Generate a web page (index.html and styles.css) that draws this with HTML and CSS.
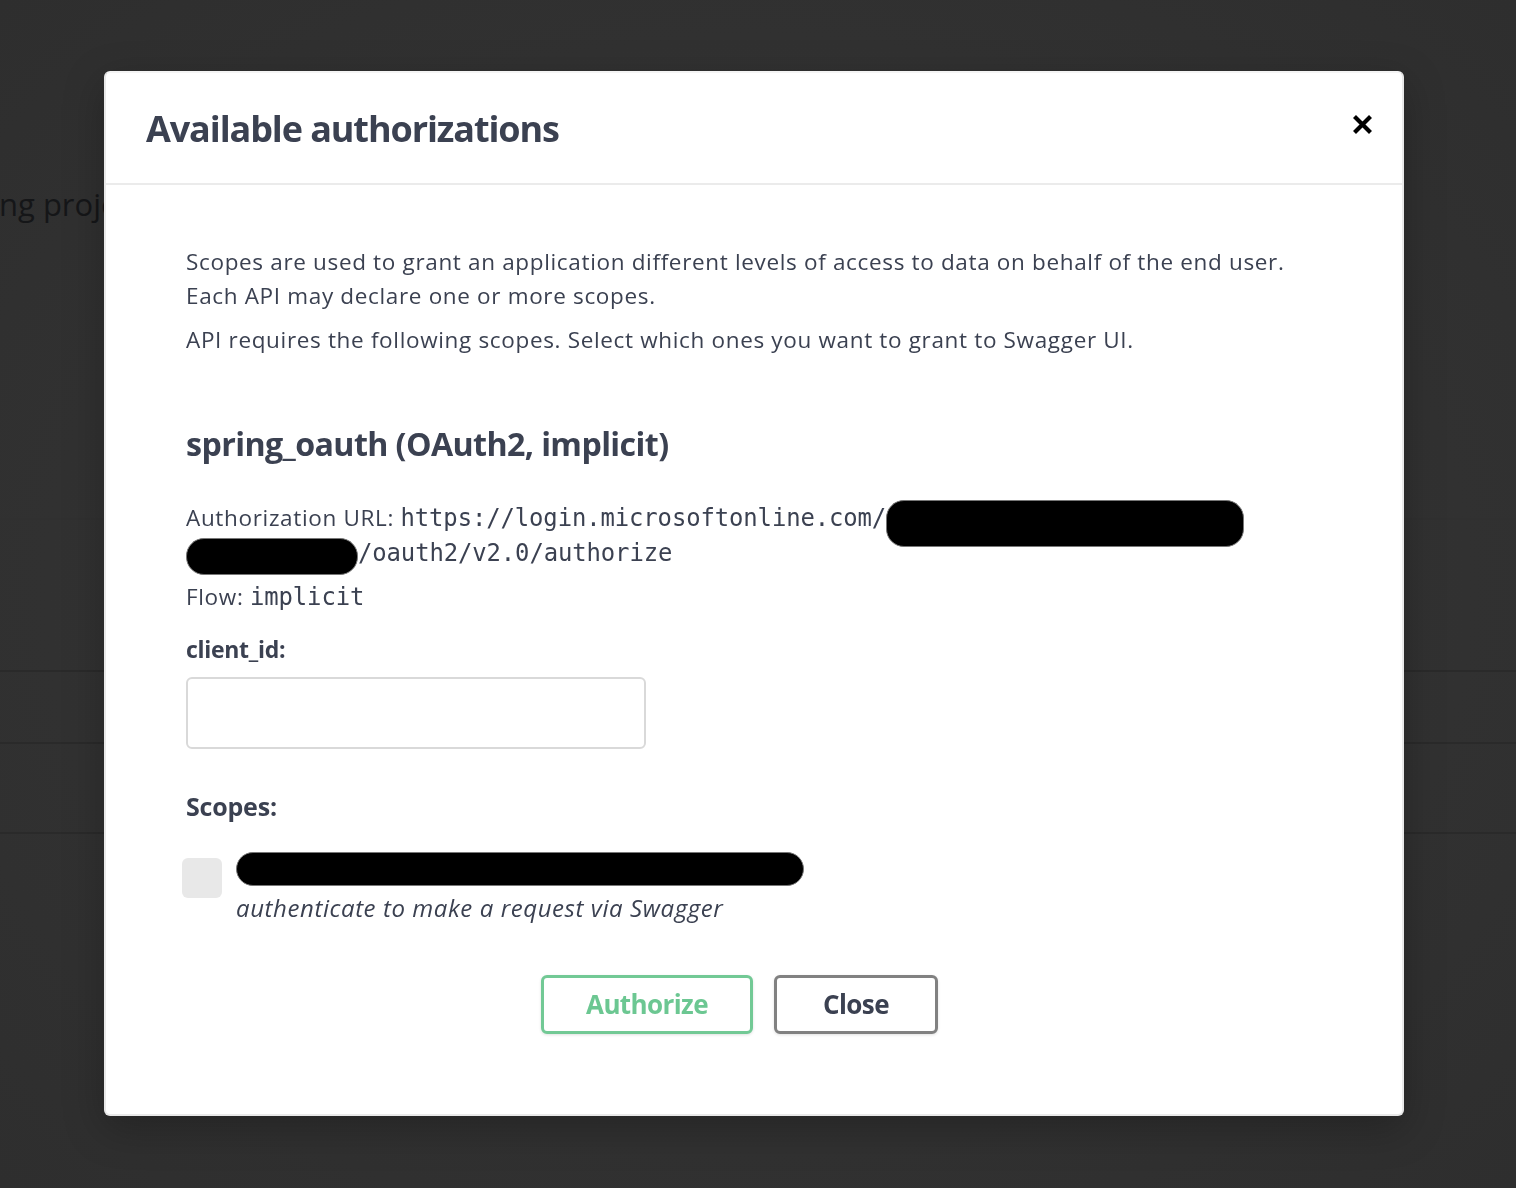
FILE: index.html
```html
<!DOCTYPE html>
<html lang="en">
<head>
<meta charset="utf-8">
<title>Available authorizations</title>
<link rel="stylesheet" href="styles.css">
</head>
<body>
<div class="page">
  <div class="page-top">
    <p class="page-desc">ng project</p>
  </div>
  <div class="page-row row-a"></div>
  <div class="page-row row-b"></div>
  <div class="page-row row-c"></div>
  <div class="page-row row-d"></div>
</div>

<div class="backdrop">
  <div class="modal">
    <div class="modal-header">
      <h3 class="modal-title">Available authorizations</h3>
      <button class="close-x" aria-label="Close">
        <svg width="21" height="21" viewBox="0 0 21 21"><path d="M2.5 2.5 L18.5 18.5 M18.5 2.5 L2.5 18.5" stroke="#000" stroke-width="4.2" stroke-linecap="butt"/></svg>
      </button>
    </div>
    <div class="modal-body">
      <p class="intro">Scopes are used to grant an application different levels of access to data on behalf of the end user.<br>Each API may declare one or more scopes.</p>
      <p class="intro">API requires the following scopes. Select which ones you want to grant to Swagger UI.</p>

      <h4 class="scheme-title">spring_oauth (OAuth2, implicit)</h4>

      <p class="info">Authorization URL: <code>https://login.microsoftonline.com/</code><span class="redact redact-1"></span><br><span class="redact redact-2"></span><code>/oauth2/v2.0/authorize</code></p>
      <p class="info">Flow: <code>implicit</code></p>

      <label class="field-label" for="client_id">client_id:</label>
      <input class="text-input" id="client_id" type="text">

      <h4 class="scopes-title">Scopes:</h4>
      <div class="scope">
        <span class="checkbox"></span>
        <div class="scope-text">
          <div class="scope-name"><span class="redact redact-3"></span></div>
          <p class="scope-desc">authenticate to make a request via Swagger</p>
        </div>
      </div>

      <div class="btn-row">
        <button class="btn btn-authorize">Authorize</button>
        <button class="btn btn-close">Close</button>
      </div>
    </div>
  </div>
</div>
</body>
</html>
```

FILE: styles.css
```css
html, body {
  margin: 0;
  padding: 0;
}
body {
  width: 1516px;
  height: 1188px;
  overflow: hidden;
  background: #323232;
  font-family: "Open Sans", "Liberation Sans", sans-serif;
  color: #3b4151;
}

/* dimmed page behind the modal */
.page {
  height: 1188px;
  background: radial-gradient(ellipse at 50% 50%, #343434 0%, #323232 55%, #2e2e2e 100%);
}
.page-top {
  height: 518px;
  box-sizing: border-box;
  padding-top: 184px;
}
.page-desc {
  margin: 0 0 0 -1px;
  font-size: 31px;
  line-height: 40px;
  color: #151618;
}
.page-row {
  border-top: 2px solid #2a2a2a;
}
.row-a { height: 150px; border-top-color: #303030; }
.row-b { height: 70px; }
.row-c { height: 88px; }
.row-d { height: 200px; }

.backdrop {
  position: fixed;
  inset: 0;
  display: flex;
  justify-content: center;
  align-items: flex-start;
  padding: 71px 8px 0 0;
}

.modal {
  width: 1300px;
  height: 1045px;
  box-sizing: border-box;
  background: #fff;
  border: 2px solid #e9e9e9;
  border-top-color: #f4f4f4;
  border-radius: 6px;
  box-shadow: 0 12px 40px rgba(0,0,0,.25);
}

.modal-header {
  height: 112px;
  box-sizing: border-box;
  border-bottom: 2px solid #ebebeb;
  display: flex;
  align-items: center;
  justify-content: space-between;
  padding: 0 29px 0 40px;
}
.modal-title {
  margin: 0;
  font-size: 36px;
  font-weight: 700;
  letter-spacing: -1.1px;
  line-height: 48px;
  color: #3b4151;
  padding-top: 2px;
}
.close-x {
  border: 0;
  background: none;
  padding: 0;
  width: 21px;
  height: 21px;
  margin-top: -7px;
  display: flex;
}

.modal-body {
  padding: 60px 82px 0 80px;
}
.intro {
  margin: 0 0 10px;
  font-size: 22.5px;
  letter-spacing: 0.66px;
  line-height: 34px;
}
.scheme-title {
  margin: 65px 0 35px;
  font-size: 32.2px;
  line-height: 44px;
  font-weight: 700;
  letter-spacing: -0.6px;
}
.info {
  margin: 0 0 8px;
  font-size: 22.5px;
  letter-spacing: 0.66px;
  line-height: 34px;
}
.info code {
  font-family: "DejaVu Sans Mono", "Liberation Mono", monospace;
  font-size: 23.9px;
  letter-spacing: -0.1px;
  line-height: 1;
}

.redact {
  display: inline-block;
  background: #000;
  border: 1px solid #777;
  box-sizing: border-box;
}
.redact-1 {
  width: 358px;
  height: 47px;
  border-radius: 18px;
  vertical-align: middle;
  margin: -7px 0 -7px 0;
  position: relative;
  top: 4px;
}
.redact-2 {
  width: 172px;
  height: 37px;
  border-radius: 18px;
  vertical-align: middle;
  margin: -2px 0 -2px 0;
  position: relative;
  top: 1px;
}
.redact-3 {
  width: 568px;
  height: 34px;
  border-radius: 17px;
  display: block;
}

.field-label {
  display: block;
  margin: 18px 0 11px;
  font-size: 23px;
  line-height: 34px;
  font-weight: 700;
  letter-spacing: -0.3px;
}
.text-input {
  display: block;
  width: 460px;
  height: 72px;
  box-sizing: border-box;
  border: 2px solid #d9d9d9;
  border-radius: 6px;
  margin: 0;
  padding: 0 14px;
  font-size: 21px;
  font-family: "Open Sans", sans-serif;
}

.scopes-title {
  margin: 40px 0 29px;
  font-size: 25px;
  line-height: 34px;
  font-weight: 700;
  letter-spacing: -0.2px;
}
.scope {
  display: flex;
  gap: 14px;
  margin-left: -4px;
}
.checkbox {
  flex: 0 0 auto;
  width: 40px;
  height: 40px;
  margin-top: 6px;
  border-radius: 6px;
  background: #e8e8e8;
}
.scope-name {
  height: 39px;
}
.scope-desc {
  margin: 0;
  font-size: 24px;
  letter-spacing: 0.58px;
  line-height: 34px;
  font-style: italic;
}

.btn-row {
  display: flex;
  justify-content: center;
  gap: 21px;
  margin-top: 50px;
  padding-right: 27px;
}
.btn {
  height: 59px;
  box-sizing: border-box;
  border-radius: 6px;
  background: #fff;
  font-family: "Open Sans", sans-serif;
  font-size: 26px;
  font-weight: 700;
  letter-spacing: -0.6px;
  box-shadow: 0 1px 3px rgba(0,0,0,.12);
  padding: 0;
}
.btn-authorize {
  width: 212px;
  border: 3px solid #72c995;
  color: #6cc792;
}
.btn-close {
  width: 164px;
  border: 3px solid #818181;
  color: #3b4151;
}
```
